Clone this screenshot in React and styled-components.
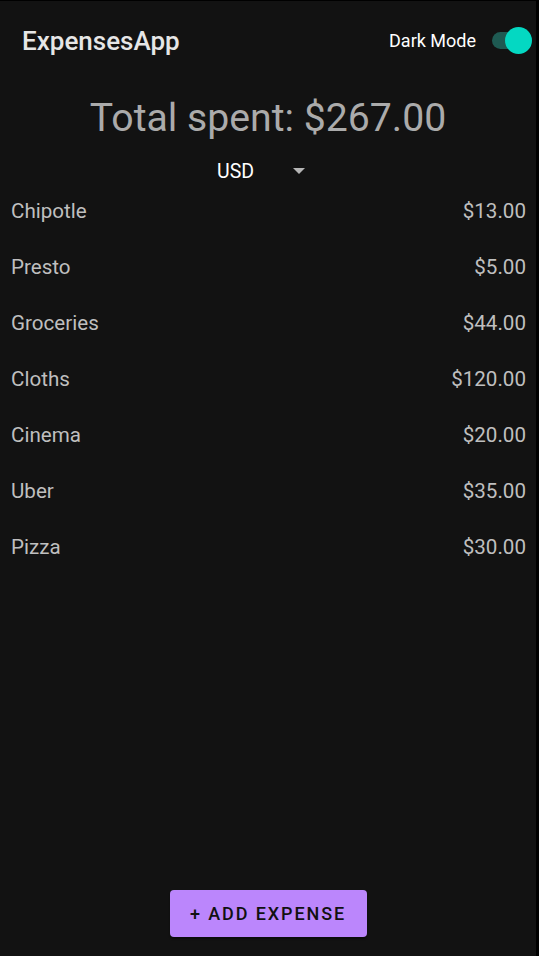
import React from "react";
import styled, { createGlobalStyle } from "styled-components";

const Global = createGlobalStyle`
  html, body { margin: 0; padding: 0; background: #000; }
  body { font-family: Roboto, "Noto Sans", Arial, sans-serif; }
  * { box-sizing: border-box; }
`;

const Page = styled.div`
  width: 536px;
  margin-top: 1px;
  min-height: calc(100vh - 1px);
  background: #121212;
  display: flex;
  flex-direction: column;
`;

const Header = styled.header`
  height: 79px;
  display: flex;
  align-items: center;
  justify-content: space-between;
  padding: 0 4px 0 22px;
`;

const Title = styled.h1`
  margin: 0;
  font-size: 26px;
  font-weight: 500;
  color: #e6e6e6;
`;

const ModeGroup = styled.div`
  display: flex;
  align-items: center;
  gap: 16px;
`;

const ModeLabel = styled.span`
  font-size: 18px;
  color: #ffffff;
`;

const SwitchWrap = styled.div`
  position: relative;
  width: 40px;
  height: 27px;
`;

const Track = styled.div`
  position: absolute;
  left: 0;
  top: 5px;
  width: 36px;
  height: 17px;
  border-radius: 9px;
  background: #1e5a52;
`;

const Thumb = styled.div`
  position: absolute;
  right: 0;
  top: 0;
  width: 27px;
  height: 27px;
  border-radius: 50%;
  background: #04d8c2;
`;

const Total = styled.div`
  margin-top: 14px;
  text-align: center;
  font-size: 39.2px;
  line-height: 48px;
  color: #ababab;
`;

const Select = styled.div`
  margin-top: 17px;
  height: 24px;
  display: flex;
  justify-content: center;
  align-items: center;
  padding-right: 14px;
`;

const SelectValue = styled.span`
  font-size: 19.5px;
  color: #ffffff;
  width: 76px;
`;

const Caret = styled.span`
  width: 0;
  height: 0;
  border-left: 6px solid transparent;
  border-right: 6px solid transparent;
  border-top: 6px solid #b5b5b5;
`;

const List = styled.ul`
  list-style: none;
  margin: 0;
  padding: 0;
  flex: 1;
`;

const Row = styled.li`
  height: 56px;
  display: flex;
  align-items: center;
  justify-content: space-between;
  padding: 0 10px 0 11px;
  font-size: 20.6px;
  color: #bfbfbf;
`;

const Footer = styled.div`
  display: flex;
  justify-content: center;
  padding-bottom: 19px;
`;

const AddButton = styled.button`
  width: 197px;
  height: 47px;
  border: none;
  border-radius: 4px;
  background: #bb86fc;
  color: #111;
  font-family: Roboto, Arial, sans-serif;
  font-size: 18px;
  font-weight: 500;
  letter-spacing: 1.9px;
  padding: 0;
  box-shadow: 0 2px 2px rgba(0,0,0,0.4);
  cursor: pointer;
`;

const expenses = [
  ["Chipotle", "$13.00"],
  ["Presto", "$5.00"],
  ["Groceries", "$44.00"],
  ["Cloths", "$120.00"],
  ["Cinema", "$20.00"],
  ["Uber", "$35.00"],
  ["Pizza", "$30.00"],
];

export default function App() {
  return (
    <>
      <Global />
      <Page>
        <Header>
          <Title>ExpensesApp</Title>
          <ModeGroup>
            <ModeLabel>Dark Mode</ModeLabel>
            <SwitchWrap>
              <Track />
              <Thumb />
            </SwitchWrap>
          </ModeGroup>
        </Header>
        <Total>Total spent: $267.00</Total>
        <Select>
          <SelectValue>USD</SelectValue>
          <Caret />
        </Select>
        <List>
          {expenses.map(([name, amount]) => (
            <Row key={name}>
              <span>{name}</span>
              <span>{amount}</span>
            </Row>
          ))}
        </List>
        <Footer>
          <AddButton>+ ADD EXPENSE</AddButton>
        </Footer>
      </Page>
    </>
  );
}
